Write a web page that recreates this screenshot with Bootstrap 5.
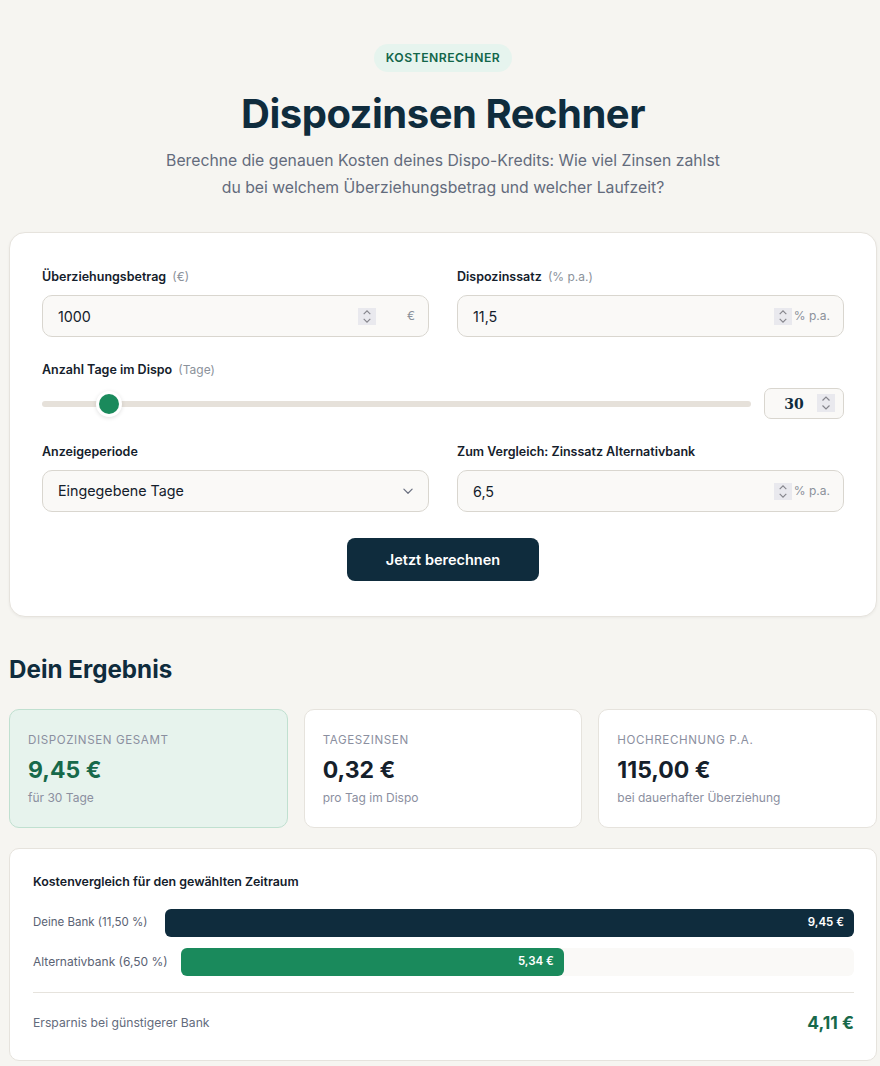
<!DOCTYPE html>
<html lang="de">
<head>
  <meta charset="UTF-8">
  <meta name="viewport" content="width=device-width, initial-scale=1.0">
  <title>Dispozinsen Rechner</title>
  <link href="https://cdn.jsdelivr.net/npm/bootstrap@5.3.0/dist/css/bootstrap.min.css" rel="stylesheet">
  <style>
    html, body { height: 1066px; overflow: hidden; }
    body { background: #f6f5f1; font-family: "Inter", "Noto Sans", sans-serif; color: #0f2c3d; }
    .page-wrap { padding: 44px 3px 0 9px; }
    .pill-tag { background: #e6f4ee; color: #12664a; font-size: 12.2px; font-weight: 600; letter-spacing: .5px; border-radius: 14px; padding: 0 12px; height: 28px; line-height: 28px; display: inline-block; }
    .hero-title { font-size: 40px; font-weight: 700; line-height: 48px; margin: 18px 0 9px; letter-spacing: -.5px; }
    .hero-sub { font-size: 15.75px; line-height: 27px; color: #636b7c; margin: 0 auto; width: 570px; }
    .calc-box { background: #fff; border: 1px solid #e6e3dd; border-radius: 16px; padding: 35px 32px 0; height: 385px; margin-top: 31px; box-shadow: 0 1px 3px rgba(0,0,0,.05); }
    .field-row { display: flex; gap: 28px; }
    .field-col { flex: 1 1 0; position: relative; }
    .field-label { font-size: 12.5px; font-weight: 600; color: #14202b; margin-bottom: 9px; line-height: 18px; display: block; }
    .field-label span { color: #8b929b; font-size: 12px; font-weight: 400; margin-left: 3px; }
    .calc-box .form-control, .calc-box .form-select { height: 42px; background-color: #faf9f7; border: 1px solid #d9d6cf; border-radius: 10px; padding-left: 15px; font-size: 14.3px; color: #14202b; box-shadow: none; }
    .calc-box .form-select { background-image: url("data:image/svg+xml,%3csvg xmlns='http://www.w3.org/2000/svg' viewBox='0 0 16 16'%3e%3cpath fill='none' stroke='%236b7080' stroke-linecap='round' stroke-linejoin='round' stroke-width='1.6' d='M2.5 5.5 8 11l5.500-5.500'/%3e%3c/svg%3e"); }
    .unit-txt { position: absolute; right: 14px; bottom: 12px; font-size: 12px; line-height: 18px; color: #8b929b; }
    .spin-box { position: absolute; width: 18px; height: 17px; bottom: 12px; background: #e9e9ee; color: #85858c; display: flex; }
    .spin-euro { right: 53px; }
    .spin-pct { right: 52px; }
    .spin-days { right: 9px; bottom: 7px; height: 18px; }
    .gap-row { margin-top: 24px; }
    .slider-line { display: flex; align-items: center; gap: 13px; }
    .days-range { flex: 1 1 0; height: 20px; }
    .days-range::-webkit-slider-runnable-track { height: 6px; border-radius: 3px; background: #e6e1da; }
    .days-range::-webkit-slider-thumb { width: 20px; height: 20px; margin-top: -7px; border-radius: 50%; background: #1a8a5c; box-shadow: 0 0 0 3px #fff, 0 1px 4px 3px rgba(0,0,0,.12); }
    .days-wrap { position: relative; width: 80px; flex: none; }
    .calc-box .days-box { height: 31px; border-radius: 7px; font-family: "DejaVu Serif", serif; font-weight: 700; font-size: 14px; text-align: center; color: #0f2c3d; padding: 0 27px 0 7px; }
    .go-btn { width: 192px; height: 43px; background: #0f2c3d; color: #fff; font-size: 14.5px; font-weight: 600; border: 0; border-radius: 8px; margin-top: 26px; }
    .go-btn:hover { background: #0f2c3d; color: #fff; }
    .section-head { font-size: 24.2px; font-weight: 700; line-height: 30px; margin: 38px 0 24px; }
    .stat-box { flex: 1 1 0; height: 119px; background: #fff; border: 1px solid #e6e3dd; border-radius: 10px; padding: 22px 18px 0; }
    .stat-box.is-main { background: #e7f3ed; border-color: #c0e0d0; }
    .stat-name { font-size: 11.6px; letter-spacing: .6px; color: #8b8fa0; line-height: 16px; }
    .stat-val { font-size: 23px; font-weight: 700; line-height: 30px; margin: 7px 0 5px; color: #14202b; }
    .is-main .stat-val { color: #17694a; }
    .stat-note { font-size: 12px; color: #8b8fa0; line-height: 16px; }
    .compare-box { background: #fff; border: 1px solid #e6e3dd; border-radius: 10px; padding: 24px 22px 0 23px; margin-top: 20px; height: 213px; }
    .compare-title { font-size: 12.4px; font-weight: 600; color: #14202b; line-height: 18px; margin-bottom: 18px; }
    .bar-row { height: 28px; margin-bottom: 11px; font-size: 11.5px; color: #5a6273; gap: 12px; }
    .bar-name { width: 120px; flex: none; white-space: nowrap; }
    .bar-name.is-wide { width: 136px; font-size: 12px; }
    .bar-bg { background: #faf9f7; border-radius: 6px; height: 28px; }
    .bar-fill { height: 28px; border-radius: 6px; color: #fff; font-size: 11.5px; font-weight: 600; padding-right: 10px; }
    .fill-navy { background: #0f2c3d; }
    .fill-green { background: #1a8a5c; }
    .save-row { border-top: 1px solid #e6e3dd; margin-top: 16px; padding-top: 17px; }
    .save-txt { font-size: 12.2px; color: #636b7c; }
    .save-val { font-size: 17.5px; font-weight: 700; color: #17694a; }
  </style>
</head>
<body>
  <svg width="0" height="0" class="position-absolute">
    <symbol id="spin-arrows" viewBox="0 0 18 18"><path d="M5.500 6.500 9 3l3.500 3.500M5.500 11.500 9 15l3.500-3.500" fill="none" stroke="currentColor" stroke-width="1.200"/></symbol>
  </svg>
  <div class="page-wrap">
    <div class="text-center">
      <span class="pill-tag">KOSTENRECHNER</span>
      <h1 class="hero-title">Dispozinsen Rechner</h1>
      <p class="hero-sub">Berechne die genauen Kosten deines Dispo-Kredits: Wie viel Zinsen zahlst du bei welchem Überziehungsbetrag und welcher Laufzeit?</p>
    </div>

    <form class="calc-box" onsubmit="return false">
      <div class="field-row">
        <div class="field-col">
          <label class="field-label" for="betrag">Überziehungsbetrag <span>(€)</span></label>
          <input type="text" inputmode="decimal" id="betrag" class="form-control" value="1000">
          <span class="spin-box spin-euro"><svg width="18" height="17"><use href="#spin-arrows"/></svg></span>
          <span class="unit-txt">€</span>
        </div>
        <div class="field-col">
          <label class="field-label" for="zins">Dispozinssatz <span>(% p.a.)</span></label>
          <input type="text" inputmode="decimal" id="zins" class="form-control" value="11,5">
          <span class="spin-box spin-pct"><svg width="18" height="17"><use href="#spin-arrows"/></svg></span>
          <span class="unit-txt">% p.a.</span>
        </div>
      </div>
      <div class="gap-row">
        <label class="field-label" for="tage">Anzahl Tage im Dispo <span>(Tage)</span></label>
        <div class="slider-line">
          <input type="range" id="tage" class="form-range days-range" min="0" max="365" value="30">
          <div class="days-wrap">
            <input type="text" inputmode="numeric" class="form-control days-box" value="30" aria-label="Tage">
            <span class="spin-box spin-days"><svg width="18" height="18"><use href="#spin-arrows"/></svg></span>
          </div>
        </div>
      </div>
      <div class="field-row gap-row">
        <div class="field-col">
          <label class="field-label" for="periode">Anzeigeperiode</label>
          <select id="periode" class="form-select">
            <option>Eingegebene Tage</option>
            <option>Pro Monat</option>
            <option>Pro Jahr</option>
          </select>
        </div>
        <div class="field-col">
          <label class="field-label" for="alt">Zum Vergleich: Zinssatz Alternativbank</label>
          <input type="text" inputmode="decimal" id="alt" class="form-control" value="6,5">
          <span class="spin-box spin-pct"><svg width="18" height="17"><use href="#spin-arrows"/></svg></span>
          <span class="unit-txt">% p.a.</span>
        </div>
      </div>
      <div class="text-center"><button class="btn go-btn" type="submit">Jetzt berechnen</button></div>
    </form>

    <h2 class="section-head">Dein Ergebnis</h2>
    <div class="d-flex gap-3">
      <div class="stat-box is-main"><div class="stat-name">DISPOZINSEN GESAMT</div><div class="stat-val">9,45 €</div><div class="stat-note">für 30 Tage</div></div>
      <div class="stat-box"><div class="stat-name">TAGESZINSEN</div><div class="stat-val">0,32 €</div><div class="stat-note">pro Tag im Dispo</div></div>
      <div class="stat-box"><div class="stat-name">HOCHRECHNUNG P.A.</div><div class="stat-val">115,00 €</div><div class="stat-note">bei dauerhafter Überziehung</div></div>
    </div>

    <div class="compare-box">
      <div class="compare-title">Kostenvergleich für den gewählten Zeitraum</div>
      <div class="bar-row d-flex align-items-center"><span class="bar-name">Deine Bank (11,50 %)</span><div class="bar-bg flex-grow-1"><div class="bar-fill fill-navy d-flex align-items-center justify-content-end" style="width:100%">9,45 €</div></div></div>
      <div class="bar-row d-flex align-items-center"><span class="bar-name is-wide">Alternativbank (6,50 %)</span><div class="bar-bg flex-grow-1"><div class="bar-fill fill-green d-flex align-items-center justify-content-end" style="width:56.9%">5,34 €</div></div></div>
      <div class="save-row d-flex justify-content-between align-items-center"><span class="save-txt">Ersparnis bei günstigerer Bank</span><span class="save-val">4,11 €</span></div>
    </div>
  </div>
  <script src="https://cdn.jsdelivr.net/npm/bootstrap@5.3.0/dist/js/bootstrap.bundle.min.js"></script>
</body>
</html>
